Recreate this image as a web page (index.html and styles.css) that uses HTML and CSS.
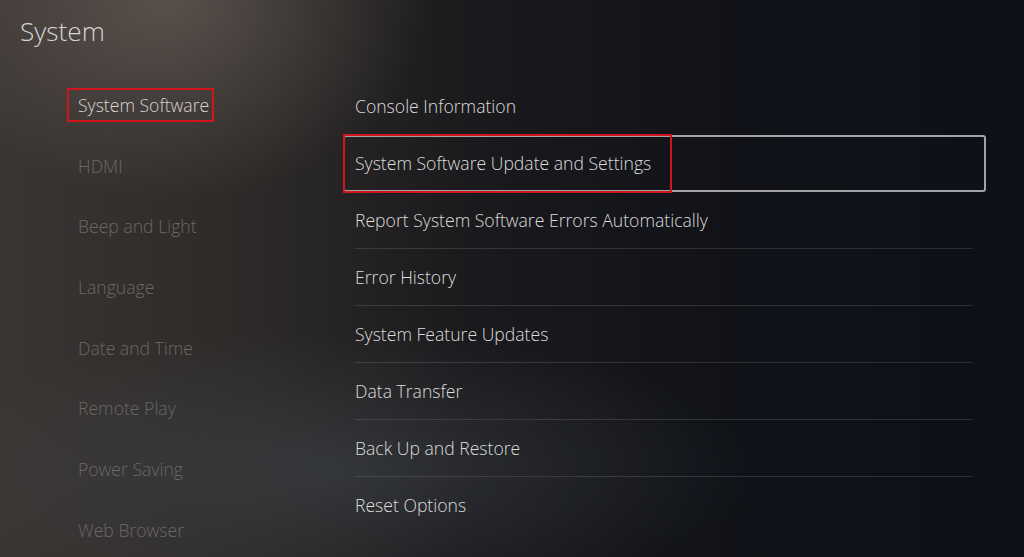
FILE: index.html
```html
<!DOCTYPE html>
<html lang="en">
<head>
<meta charset="utf-8">
<title>System</title>
<link rel="stylesheet" href="styles.css">
</head>
<body>
<div class="screen">
  <h1 class="title">System</h1>
  <div class="columns">
    <nav class="nav">
      <div class="nav-item active">System Software<span class="mark"></span></div>
      <div class="nav-item">HDMI</div>
      <div class="nav-item">Beep and Light</div>
      <div class="nav-item">Language</div>
      <div class="nav-item">Date and Time</div>
      <div class="nav-item">Remote Play</div>
      <div class="nav-item">Power Saving</div>
      <div class="nav-item">Web Browser</div>
    </nav>
    <div class="list">
      <div class="row no-line">Console Information</div>
      <div class="row focused no-line">System Software Update and Settings<span class="focus"></span><span class="mark-row"></span></div>
      <div class="row">Report System Software Errors Automatically</div>
      <div class="row">Error History</div>
      <div class="row">System Feature Updates</div>
      <div class="row">Data Transfer</div>
      <div class="row">Back Up and Restore</div>
      <div class="row no-line">Reset Options</div>
    </div>
  </div>
</div>
</body>
</html>
```

FILE: styles.css
```css
html, body {
  margin: 0;
  padding: 0;
  background: #111318;
}
.screen {
  width: 1024px;
  height: 557px;
  overflow: hidden;
  position: relative;
  font-family: "Open Sans", "Noto Sans", sans-serif;
  background:
    radial-gradient(ellipse 260px 200px at 170px 0px, rgba(120,108,100,0.55), rgba(120,108,100,0) 100%),
    radial-gradient(ellipse 420px 140px at 330px 470px, rgba(70,78,84,0.45), rgba(70,78,84,0) 100%),
    linear-gradient(90deg, #3a3533 0%, #2c2928 25%, #1b1a1d 45%, #111319 70%, #0d1017 100%);
}
.title {
  margin: 0;
  padding: 13px 0 0 20px;
  font-size: 26.2px;
  font-weight: 300;
  line-height: 36px;
  color: #d6d4d2;
}
.columns {
  display: flex;
  margin-top: 29px;
}
.nav {
  width: 265px;
  padding-left: 78px;
  padding-top: 10px;
  display: flex;
  flex-direction: column;
}
.nav-item {
  position: relative;
  height: 60.7px;
  line-height: 34px;
  font-size: 17.6px;
  font-weight: 300;
  color: #6a6866;
  white-space: nowrap;
}
.nav-item.active {
  color: #d8d6d4;
}
.mark {
  position: absolute;
  left: -11px;
  top: 0;
  width: 147px;
  height: 34px;
  border: 2px solid #d0161c;
  box-sizing: border-box;
}
.list {
  margin-left: 12px;
  width: 618px;
  display: flex;
  flex-direction: column;
}
.row {
  position: relative;
  height: 56px;
  line-height: 56px;
  font-size: 17.6px;
  font-weight: 300;
  color: #dcdcdc;
  border-bottom: 1px solid rgba(255,255,255,0.12);
  white-space: nowrap;
}
.row.no-line {
  border-bottom-color: transparent;
}
.focus {
  position: absolute;
  left: -12px;
  right: -13px;
  top: 0;
  bottom: -1px;
  border: 2px solid #a3a2a4;
  border-radius: 3px;
  box-sizing: border-box;
}
.mark-row {
  position: absolute;
  left: -12px;
  width: 329px;
  top: -1px;
  height: 59px;
  border: 2px solid #d0161c;
  box-sizing: border-box;
}
```
